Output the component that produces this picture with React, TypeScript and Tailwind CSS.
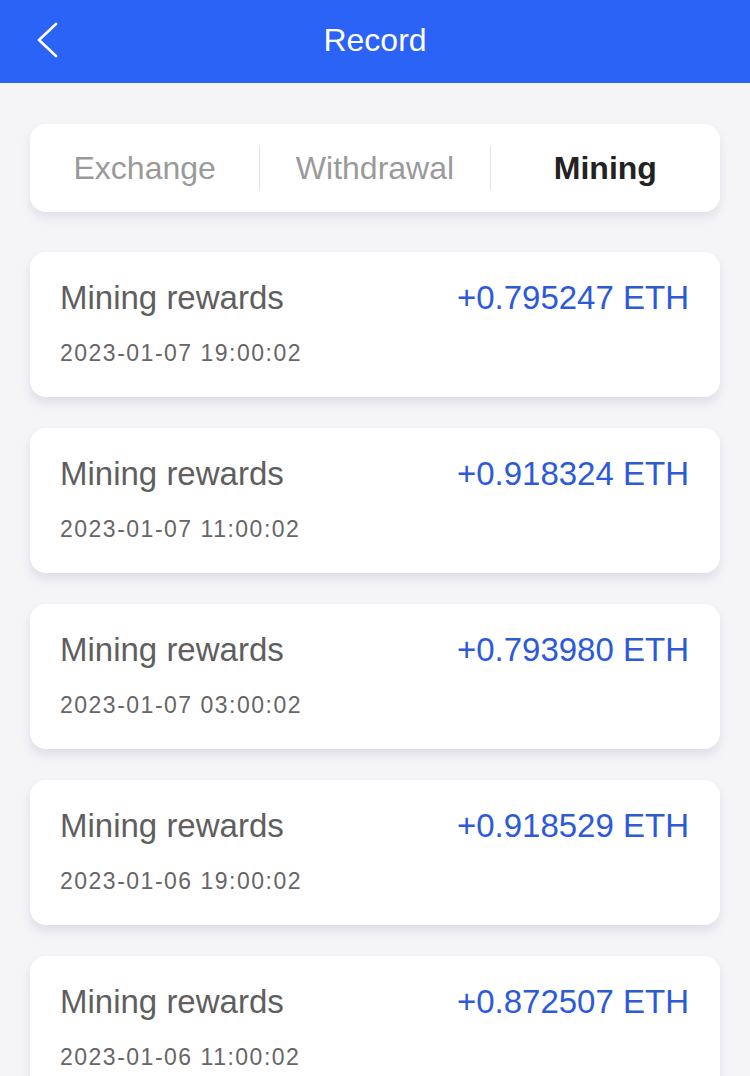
const rows = [
  { amount: "+0.795247 ETH", time: "2023-01-07 19:00:02" },
  { amount: "+0.918324 ETH", time: "2023-01-07 11:00:02" },
  { amount: "+0.793980 ETH", time: "2023-01-07 03:00:02" },
  { amount: "+0.918529 ETH", time: "2023-01-06 19:00:02" },
  { amount: "+0.872507 ETH", time: "2023-01-06 11:00:02" },
];

const tabs = ["Exchange", "Withdrawal", "Mining"];

export default function App() {
  return (
    <div className="min-h-[1076px] bg-[#f5f5f7] font-['Liberation_Sans',Arial,sans-serif]">
      <header className="relative flex h-[83px] items-center justify-center bg-[#2b63f6] pb-[4px]">
        <button className="absolute left-[35px] top-[22px]">
          <svg width="24" height="36" viewBox="0 0 24 36" fill="none">
            <path d="M21 2 L4 18 L21 34" stroke="white" strokeWidth="2.6" strokeLinecap="round" strokeLinejoin="round" />
          </svg>
        </button>
        <h1 className="text-[32px] leading-none text-white">Record</h1>
      </header>

      <div className="px-[30px] pt-[41px]">
        <div className="flex h-[88px] items-center rounded-[16px] bg-white shadow-[0_6px_10px_rgba(110,100,170,0.14)]">
          {tabs.map((t, i) => (
            <div key={t} className={"flex flex-1 items-center justify-center " + (i > 0 ? "border-l border-[#e3e3e3]" : "")}>
              <span className={"py-[6px] text-[32px] leading-[32px] " + (t === "Mining" ? "font-bold text-[#222]" : "text-[#9a9a9a]")}>{t}</span>
            </div>
          ))}
        </div>

        <div className="mt-[40px] flex flex-col gap-[31px]">
          {rows.map((r) => (
            <div key={r.time} className="rounded-[16px] bg-white pb-[30px] pl-[30px] pr-[31px] pt-[26px] shadow-[0_6px_10px_rgba(110,100,170,0.16)]">
              <div className="flex items-center justify-between">
                <span className="text-[33px] leading-[40px] text-[#5f5f5f]">Mining rewards</span>
                <span className="text-[33px] leading-[40px] text-[#2c5ad8]">{r.amount}</span>
              </div>
              <div className="mt-[21px] text-[23px] leading-[28px] tracking-[1.5px] text-[#666]">{r.time}</div>
            </div>
          ))}
        </div>
      </div>
    </div>
  );
}
